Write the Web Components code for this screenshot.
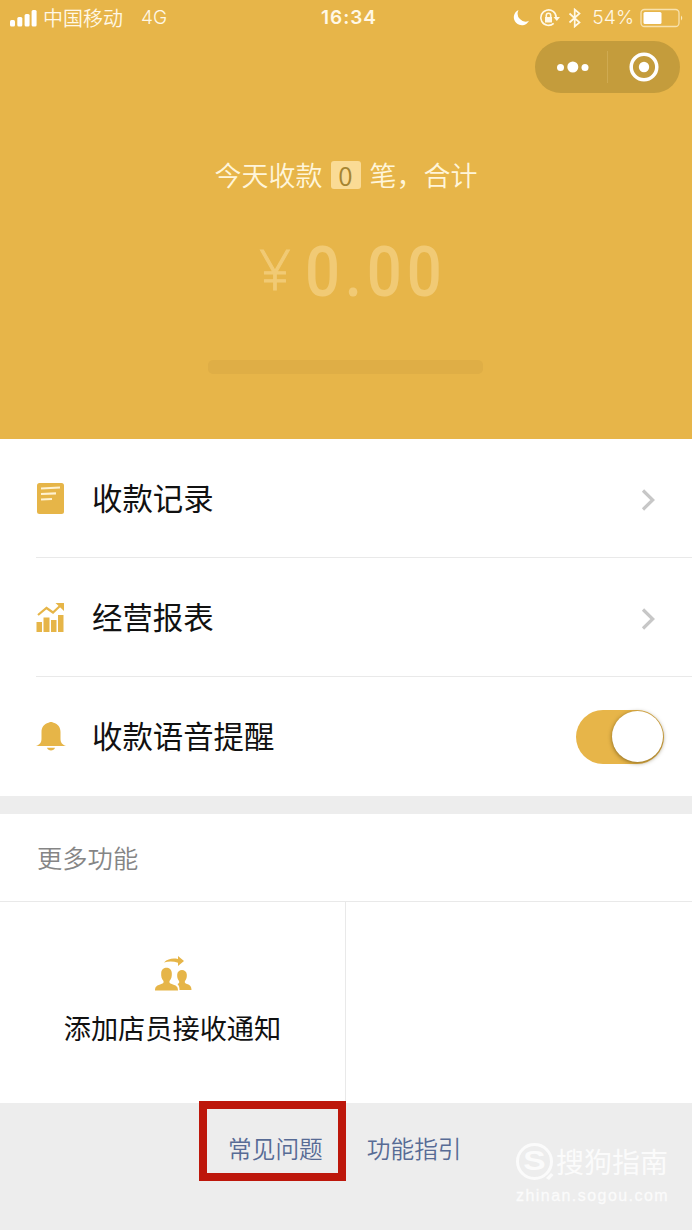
<!DOCTYPE html>
<html lang="zh-CN">
<head>
<meta charset="utf-8">
<title>收款小账本</title>
<style>
html,body{margin:0;background:#ededed}
body{font-family:"Noto Sans CJK SC","Liberation Sans",sans-serif;width:692px;height:1230px;overflow:hidden}
</style>
</head>
<body>
<pay-app></pay-app>
<script>
const define=(name,html)=>customElements.define(name,class extends HTMLElement{
  constructor(){super();this.attachShadow({mode:'open'}).innerHTML=html;}
});

define('status-bar',`<style>
:host{display:flex;height:35px;align-items:center;color:#fff8e6;font-size:20px;line-height:35px;font-weight:350}
div{display:flex;align-items:center;height:35px;box-sizing:border-box}
svg{display:block;flex:none}
.l{width:300px;padding-left:9px}
.net{font-family:Inter,sans-serif;font-size:19px;font-weight:350;margin-left:18px}
.t{width:98px;justify-content:center;font-family:Inter,sans-serif;font-size:19px;font-weight:600;letter-spacing:1px}
.r{flex:1;justify-content:flex-end;padding-right:8px}
.p{font-family:Inter,sans-serif;font-size:19.300px;font-weight:350;margin:0 6px 0 10px}
</style>
<div class="l"><svg width="28" height="18" viewBox="0 0 28 18" fill="#fff" style="margin-right:6px"><rect x="1" y="11" width="5" height="6.5" rx="1.5"/><rect x="8.3" y="8" width="5" height="9.5" rx="1.5"/><rect x="15.6" y="5" width="5" height="12.5" rx="1.5"/><rect x="22.6" y="1" width="5" height="16.500" rx="1.500"/></svg><span>中国移动</span><span class="net">4G</span></div>
<div class="t">16:34</div>
<div class="r">
<svg width="17" height="18" viewBox="0 0 17 18" fill="#fff"><path d="M5.500 1A8 8 0 1 0 16 11.800A8 8 0 0 1 5.500 1Z"/></svg>
<svg width="22" height="20" viewBox="0 0 22 20" fill="none" stroke="#fff8e6" stroke-width="1.600" style="margin-left:9px"><path d="M14.700 15.300A7.700 7.700 0 1 1 17.200 9.500"/><path d="M14.500 9h6.500l-3.200 4z" fill="#fff8e6" stroke="none"/><rect x="6" y="9" width="7" height="5.500" fill="#fff8e6" stroke="none"/><path d="M7.300 9V7.500a2.200 2.200 0 0 1 4.400 0V9"/></svg>
<svg width="14" height="20" viewBox="0 0 14 20" fill="none" stroke="#fff8e6" stroke-width="1.700" style="margin-left:7px"><path d="M1.500 5.500L11.500 14.500L6.700 18.500V1.500L11.500 5.500L1.500 14.500"/></svg>
<span class="p">54%</span>
<svg width="44" height="20" viewBox="0 0 44 20"><rect x="1" y="1.500" width="38" height="17" rx="3.500" fill="none" stroke="#f8e2ae" stroke-width="1.300"/><rect x="3.500" y="4" width="18" height="12" rx="1.500" fill="#fff"/><path d="M41 7.500q2.500 2.500 0 5z" fill="#fbe8bc"/></svg>
</div>`);

define('capsule-menu',`<style>
:host{display:flex;width:145px;height:52px;border-radius:26px;background:#c49c3c;align-items:center;margin:6px 12px 0 auto}
svg{display:block}
</style><svg width="145" height="52" viewBox="0 0 145 52"><g fill="#fff"><circle cx="25.500" cy="26.500" r="3.500"/><circle cx="37.800" cy="26" r="5.500"/><circle cx="50" cy="26.500" r="3.500"/><circle cx="109" cy="26" r="5.200"/></g><path d="M72.500 10V42" stroke="#cfaa51"/><circle cx="109" cy="26" r="12.800" fill="none" stroke="#fff" stroke-width="3.500"/></svg>`);

define('pay-summary',`<style>
:host{display:block;height:439px;background:#e7b549}
.line{display:flex;justify-content:center;align-items:center;margin-top:63px;height:40px;color:#fff5da;font-size:27px;font-weight:350;white-space:pre}
.line span{margin-top:-3px}
.line .n{width:30px;height:28px;line-height:27px;margin:-2px 9px 0 8px;border-radius:3px;background:#fadb95;color:#a58430;text-align:center;font-size:26px;font-weight:350}
.amt{display:flex;height:90px;margin-top:31px;color:#f1ca75;align-items:center}
.y{width:50px;margin:-7px 0 0 250px;font:300 55px/84px "Open Sans",sans-serif;text-align:center;-webkit-text-stroke:1px #f1ca75}
.v{margin-left:5px;font:500 70.500px/90px Roboto,sans-serif;letter-spacing:5.500px;transform:scaleX(.875);transform-origin:0 50%}
.bar{width:275px;height:14px;border-radius:5px;background:#dfae46;margin:43px auto 0 208px}
</style>
<status-bar></status-bar><capsule-menu></capsule-menu>
<div class="line"><span>今天收款</span><span class="n">0</span><span>笔，合计</span></div>
<div class="amt"><span class="y">¥</span><span class="v">0.00</span></div>
<div class="bar"></div>`);

define('menu-row',`<style>
:host{display:flex;margin-left:36px;height:118px;border-bottom:1px solid #e9e9e9;align-items:center;color:#111;font-size:30.400px}
:host([last]){border:0;height:119px}
.i{width:56px;display:flex}
.t{flex:1;line-height:60px;margin-top:-3px}
</style><span class="i"><slot name="icon"></slot></span><span class="t"><slot></slot></span><slot name="end"></slot>`);

define('row-arrow',`<style>:host{display:block;margin-right:35px;margin-top:3px}svg{display:block}</style>
<svg width="18" height="24" viewBox="0 0 18 24" fill="none" stroke="#c7c7c7" stroke-width="3.200"><path d="M4 2.500L13.700 12L4 21.500"/></svg>`);

define('toggle-switch',`<style>
:host{display:flex;justify-content:flex-end;align-items:center;box-sizing:border-box;width:88px;height:54px;border-radius:27px;background:#e7b549;padding-right:1px;margin-right:28px}
i{width:51px;height:51px;border-radius:50%;background:#fff;box-shadow:0 1px 4px rgba(70,50,0,.6)}
</style><i></i>`);

define('more-section',`<style>
:host{display:block;background:#fff;border-top:18px solid #ededed}
h2{margin:0;padding-left:37px;height:87px;line-height:86px;font-size:25.300px;font-weight:350;color:#858585;border-bottom:1px solid #e9e9e9}
.g{display:grid;grid-template-columns:346px 1fr;height:201px}
.c{box-sizing:border-box;border-right:1px solid #e9e9e9;display:flex;flex-direction:column;align-items:center;color:#111;font-size:27.200px}
svg{display:block;margin-top:52px}
.c span{line-height:40px;margin-top:13px;white-space:nowrap}
</style><h2>更多功能</h2><div class="g"><div class="c">
<svg width="40" height="40" viewBox="0 0 40 40" fill="#e6b548"><path d="M11 8.500C15 4.500 20 4 25 5V2L31 7L25 12V8.700C20 7 15 7.200 11 8.500Z"/><path d="M2 36.500C2 32.500 4 31.500 7 30.500C10 29.500 11 29 10.500 27C8.500 25 8 22 8.200 19C8.500 12 18.500 12 18.800 19C19 22 18.500 25 16.500 27C16 29 17 29.500 20 30.500C23 31.500 25 32.500 25 36.500Z"/><path d="M26.500 36H38.500C38.500 32.500 37 31 34 30C32 29.300 31.300 28.500 32 27C33.500 25 34 23 33.800 20.500C33.500 14.500 24.500 14.500 24.200 20.500C24 23 24.500 25 26 27C26.700 28.500 26 29.300 24.500 30C26 31.500 26.500 33 26.500 36Z"/></svg>
<span>添加店员接收通知</span></div><div></div></div>`);

define('page-footer',`<style>
:host{display:block;position:relative;height:127px;background:#ededed;color:#576b95;font-weight:350}
nav{display:flex;padding-left:228px;gap:44px;font-size:23.700px;line-height:40px;padding-top:25px}
.mark{position:absolute;left:199px;top:-2px;width:131px;height:64px;border:8px solid #bd170b}
.wm{position:absolute;left:516px;top:38px;color:#fbfbfb;width:170px;white-space:nowrap}
.b{display:flex;align-items:center;height:40px;font-size:28px;line-height:40px;font-weight:400}
.s{width:37px;height:37px;box-sizing:border-box;border:3px solid #fbfbfb;border-radius:50%;display:flex;justify-content:center;align-items:center;font:700 28px/30px "Liberation Sans",sans-serif;margin-right:3px;position:relative}
.s b{transform:scaleX(1.200)}
.s svg{position:absolute;left:27px;top:27px}
.u{font:400 16px/22px "Liberation Sans",sans-serif;letter-spacing:1.450px;margin-top:4px;-webkit-text-stroke:.3px #fbfbfb}
</style><nav><span>常见问题</span><span>功能指引</span></nav><div class="mark"></div>
<div class="wm"><div class="b"><span class="s"><b>S</b><svg width="8" height="8" viewBox="0 0 8 8"><path d="M0 5L5 0L7.500 2L3 7Z" fill="#fbfbfb"/></svg></span>搜狗指南</div><div class="u">zhinan.sogou.com</div></div>`);

define('pay-app',`<style>:host{display:block;width:692px;height:1230px;background:#fff}svg{display:block}</style>
<pay-summary></pay-summary>
<menu-row><svg slot="icon" width="30" height="34" viewBox="0 0 30 34"><rect x="1" y="2" width="27" height="31" rx="2.500" fill="#e6b548"/><path d="M5 7.500L24 6.500M5 13L20 12.300M5 18.500L16 18" stroke="#fff2d2" stroke-width="2.200"/></svg>收款记录<row-arrow slot="end"></row-arrow></menu-row>
<menu-row><svg slot="icon" width="30" height="32" viewBox="0 0 30 32" fill="#e6b548"><path d="M.5 21h5.500v10H.5zM7.500 16.500h6V31h-6zM15 19h5.500V31H15zM22 14h5.500V31H22z"/><path d="M2 14L10.500 7L17 11.500L25 4" fill="none" stroke="#e6b548" stroke-width="2.200"/><path d="M19.500 2H28V10Z"/></svg>经营报表<row-arrow slot="end"></row-arrow></menu-row>
<menu-row last><svg slot="icon" width="31" height="34" viewBox="0 0 31 34" fill="#e6b548"><path d="M12.500 2.800C13.500 1.700 16.500 1.700 17.500 2.800C22 3.800 24.500 7.500 24.500 12V18.500C24.500 22.500 26 24.500 30 26H0C4 24.500 5.500 22.500 5.500 18.500V12C5.500 7.500 8 3.800 12.500 2.800ZM11 27.800H19C18 31.500 12 31.500 11 27.800Z"/></svg>收款语音提醒<toggle-switch slot="end"></toggle-switch></menu-row>
<more-section></more-section><page-footer></page-footer>`);
</script>
</body>
</html>
